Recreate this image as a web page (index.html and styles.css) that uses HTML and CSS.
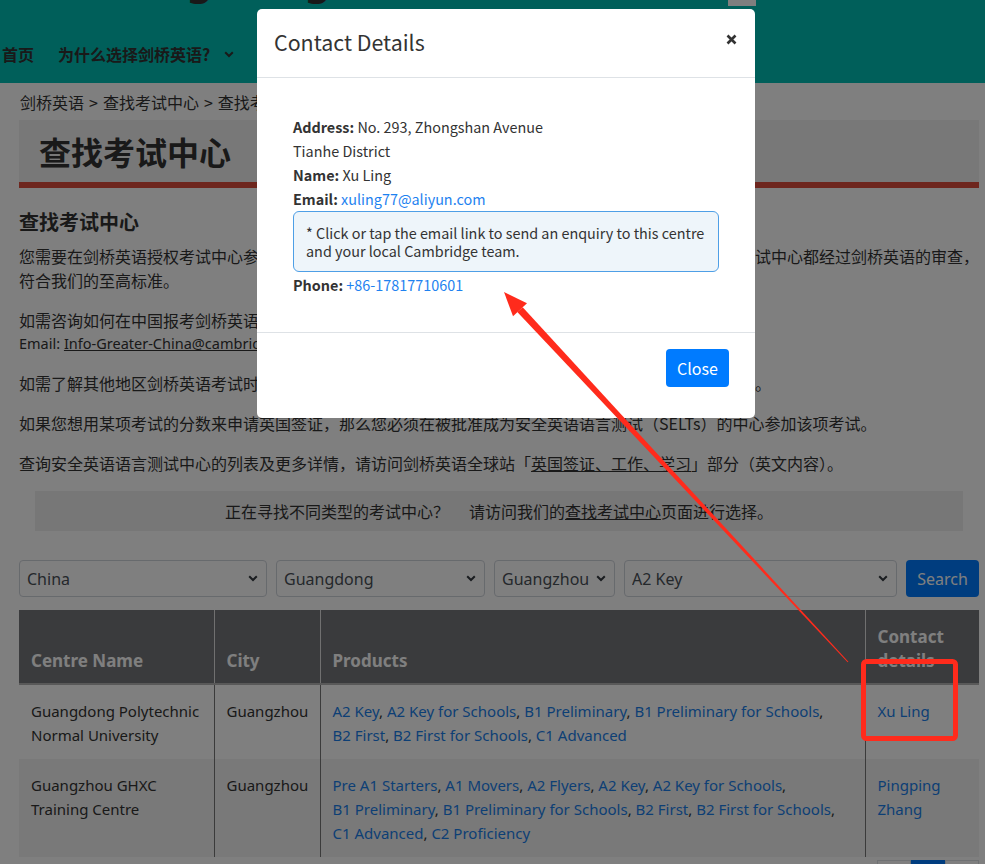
FILE: index.html
```html
<!DOCTYPE html>
<html lang="zh-CN">
<head>
<meta charset="utf-8">
<title>查找考试中心</title>
<link rel="stylesheet" href="styles.css">
</head>
<body>
<header class="site-header">
  <div class="brand-row">
    <span class="brand">Cambridge English</span>
    <span class="lang-box"></span>
  </div>
  <nav class="main-nav">
    <a class="nav-item" href="#">首页</a>
    <a class="nav-item" href="#">为什么选择剑桥英语?
      <svg class="nav-chev" width="10" height="7" viewBox="0 0 10 7"><path d="M1.2 1.2 5 5 8.8 1.2" fill="none" stroke="#333" stroke-width="2"/></svg>
    </a>
    <a class="nav-item" href="#">考试</a>
    <a class="nav-item" href="#">备考</a>
  </nav>
</header>

<main class="page">
  <div class="breadcrumb">
    <a href="#">剑桥英语</a><span class="sep">&gt;</span><a href="#">查找考试中心</a><span class="sep">&gt;</span><span>查找考试中心</span>
  </div>

  <div class="hero"><h1>查找考试中心</h1></div>

  <h2 class="section-title">查找考试中心</h2>
  <p>您需要在剑桥英语授权考试中心参加剑桥英语考试。我们在全球拥有两千八百多家授权考试中心，每个考试中心都经过剑桥英语的审查，符合我们的至高标准。</p>
  <p>如需咨询如何在中国报考剑桥英语考试，请联系剑桥大学英语考评部中国办公室。
    <span class="email-line">Email: <a href="#">Info-Greater-China@cambridgeenglish.org</a></span>
  </p>
  <p>如需了解其他地区剑桥英语考试时间及考试中心信息，请访问剑桥英语全球官方网站的考试中心搜索页面。</p>
  <p>如果您想用某项考试的分数来申请英国签证，那么您必须在被批准成为安全英语语言测试（SELTs）的中心参加该项考试。</p>
  <p>查询安全英语语言测试中心的列表及更多详情，请访问剑桥英语全球站「<a href="#">英国签证、工作、学习</a>」部分（英文内容）。</p>

  <div class="notice">
    <span class="notice-q">正在寻找不同类型的考试中心？</span>请访问我们的<a href="#">查找考试中心</a>页面进行选择。
  </div>

  <form class="filters">
    <div class="select-wrap"><select><option>China</option></select><svg class="chev" width="10" height="7" viewBox="0 0 10 7"><path d="M1.2 1.2 5 5 8.8 1.2" fill="none" stroke="#343a40" stroke-width="2"/></svg></div>
    <div class="select-wrap"><select><option>Guangdong</option></select><svg class="chev" width="10" height="7" viewBox="0 0 10 7"><path d="M1.2 1.2 5 5 8.8 1.2" fill="none" stroke="#343a40" stroke-width="2"/></svg></div>
    <div class="select-wrap"><select><option>Guangzhou</option></select><svg class="chev" width="10" height="7" viewBox="0 0 10 7"><path d="M1.2 1.2 5 5 8.8 1.2" fill="none" stroke="#343a40" stroke-width="2"/></svg></div>
    <div class="select-wrap"><select><option>A2 Key</option></select><svg class="chev" width="10" height="7" viewBox="0 0 10 7"><path d="M1.2 1.2 5 5 8.8 1.2" fill="none" stroke="#343a40" stroke-width="2"/></svg></div>
    <button type="button" class="btn btn-search">Search</button>
  </form>

  <table class="centres">
    <colgroup><col class="c-name"><col class="c-city"><col class="c-prod"><col class="c-contact"></colgroup>
    <thead>
      <tr><th>Centre Name</th><th>City</th><th>Products</th><th>Contact details</th></tr>
    </thead>
    <tbody>
      <tr>
        <td>Guangdong Polytechnic Normal University</td>
        <td>Guangzhou</td>
        <td class="products"><a href="#">A2 Key</a>, <a href="#">A2 Key for Schools</a>, <a href="#">B1 Preliminary</a>, <a href="#">B1 Preliminary for Schools</a>, <a href="#">B2 First</a>, <a href="#">B2 First for Schools</a>, <a href="#">C1 Advanced</a></td>
        <td><a href="#">Xu Ling</a></td>
      </tr>
      <tr>
        <td>Guangzhou GHXC Training Centre</td>
        <td>Guangzhou</td>
        <td class="products"><a href="#">Pre A1 Starters</a>, <a href="#">A1 Movers</a>, <a href="#">A2 Flyers</a>, <a href="#">A2 Key</a>, <a href="#">A2 Key for Schools</a>, <a href="#">B1 Preliminary</a>, <a href="#">B1 Preliminary for Schools</a>, <a href="#">B2 First</a>, <a href="#">B2 First for Schools</a>, <a href="#">C1 Advanced</a>, <a href="#">C2 Proficiency</a></td>
        <td><a href="#">Pingping Zhang</a></td>
      </tr>
    </tbody>
  </table>

  <ul class="pager">
    <li class="pg">‹</li><li class="pg active">1</li><li class="pg">›</li>
  </ul>
</main>

<div class="backdrop"></div>

<div class="modal" role="dialog">
  <div class="modal-header">
    <h3 class="modal-title">Contact Details</h3>
    <svg class="modal-x" width="11" height="11" viewBox="0 0 11 11"><path d="M1.5 1.5 9.5 9.5M9.5 1.5 1.5 9.5" stroke="#333" stroke-width="2.6" stroke-linecap="butt"/></svg>
  </div>
  <div class="modal-body">
    <p><b>Address:</b> No. 293, Zhongshan Avenue</p>
    <p>Tianhe District</p>
    <p><b>Name:</b> Xu Ling</p>
    <p><b>Email:</b> <a href="#">xuling77@aliyun.com</a></p>
    <div class="note">* Click or tap the email link to send an enquiry to this centre and your local Cambridge team.</div>
    <p><b>Phone:</b> <a href="#">+86-17817710601</a></p>
  </div>
  <div class="modal-footer">
    <button type="button" class="btn btn-close">Close</button>
  </div>
</div>

<svg class="annotation" width="985" height="864" viewBox="0 0 985 864">
  <polygon points="848.4,661.7 847.6,662.3 517.3,311.9 522.7,307.3" fill="#ff2b1c"/>
  <polygon points="504,292 527,303.2 513,316.2" fill="#ff2b1c"/>
  <rect x="863.5" y="661.5" width="92" height="77" rx="3" fill="none" stroke="#ff2b1c" stroke-width="5"/>
</svg>
</body>
</html>
```

FILE: styles.css
```css
* { box-sizing: border-box; }
html, body { margin: 0; padding: 0; }
body {
  font-family: "Noto Sans", "Noto Sans CJK SC", sans-serif;
  font-size: 16px;
  line-height: 24px;
  color: #333;
  background: #fff;
  width: 985px;
  height: 864px;
  overflow: hidden;
}
a { color: #1a7fea; text-decoration: none; }

/* header */
.site-header {
  background: #00beb4;
  height: 83px;
  display: flex;
  flex-direction: column;
}
.brand-row {
  height: 28px;
  overflow: hidden;
  display: flex;
  justify-content: space-between;
  align-items: flex-start;
}
.brand {
  font-family: "Noto Sans", sans-serif;
  font-size: 40px;
  line-height: 40px;
  font-weight: 700;
  color: #333;
  margin-top: -40px;
  margin-left: 4px;
  letter-spacing: 2px;
}
.lang-box {
  width: 28px;
  height: 6px;
  background: #fff;
  margin-right: 229px;
}
.main-nav {
  display: flex;
  align-items: center;
  gap: 24px;
  padding-left: 2px;
  height: 52px;
}
.nav-item {
  font-family: "Noto Sans CJK SC", sans-serif;
  font-weight: 700;
  font-size: 16px;
  color: #333;
  display: flex;
  align-items: center;
  gap: 8px;
}
.nav-chev { margin-left: 6px; }

/* page */
.page {
  width: 960px;
  margin-left: 19px;
  font-family: "Noto Sans", "Noto Sans CJK SC", sans-serif;
}
.breadcrumb {
  font-family: "Noto Sans CJK SC", sans-serif;
  margin-top: 7px;
  margin-bottom: 6px;
  padding-left: 1px;
  height: 24px;
}
.breadcrumb a { color: #333; }
.breadcrumb .sep { margin: 0 5px; }
.hero {
  background: #f0f0f0;
  border-bottom: 6px solid #dc4c3c;
  height: 68px;
  padding-left: 20px;
  display: flex;
  align-items: center;
}
.hero h1 {
  margin: 0;
  font-family: "Noto Sans CJK SC", sans-serif;
  font-size: 32px;
  line-height: 40px;
  font-weight: 700;
  color: #333;
}
.section-title {
  font-family: "Noto Sans CJK SC", sans-serif;
  font-size: 20px;
  line-height: 30px;
  font-weight: 700;
  margin: 19px 0 7px;
}
.page p {
  margin: 0 0 16px;
  font-family: "Noto Sans CJK SC", sans-serif;
}
.page p a { color: #333; text-decoration: underline; }
.email-line {
  display: block;
  font-family: "Noto Sans", sans-serif;
  font-size: 14.5px;
  line-height: 23px;
}
.notice {
  background: #eee;
  margin: 0 16px;
  padding: 8px 0;
  text-align: center;
  font-family: "Noto Sans CJK SC", sans-serif;
}
.notice a { color: #333; text-decoration: underline; }
.notice-q { margin-right: 20px; }

/* filters */
.filters {
  display: grid;
  grid-template-columns: 248px 209px 121px 273px 73px;
  gap: 9px;
  margin-top: 29px;
  height: 37px;
}
.select-wrap { position: relative; }
.select-wrap select {
  appearance: none;
  -webkit-appearance: none;
  width: 100%;
  height: 37px;
  border: 1px solid #ced4da;
  border-radius: 4px;
  background: #fff;
  color: #495057;
  font-family: "Noto Sans", sans-serif;
  font-size: 16px;
  padding: 0 24px 0 7px;
}
.chev {
  position: absolute;
  right: 9px;
  top: 15px;
  pointer-events: none;
}
.btn {
  border: 0;
  border-radius: 4px;
  background: #007bff;
  color: #fff;
  font-size: 16px;
  cursor: pointer;
}
.btn-search {
  height: 37px;
  font-family: "Noto Sans", sans-serif;
  padding: 0;
}

/* table */
.centres {
  width: 960px;
  margin-top: 13px;
  border-collapse: collapse;
  table-layout: fixed;
  font-family: "Noto Sans", sans-serif;
  font-size: 15px;
  line-height: 24px;
}
.c-name { width: 195px; }
.c-city { width: 106px; }
.c-prod { width: 545px; }
.c-contact { width: 114px; }
.centres th {
  background: #75777a;
  color: #fff;
  font-size: 17px;
  font-weight: 700;
  text-align: left;
  vertical-align: bottom;
  padding: 15px 12px 10px;
  border-bottom: 2px solid #b2b2b2;
  border-left: 1px solid #e0e0e0;
}
.centres th:first-child { border-left: 0; }
.centres td {
  vertical-align: top;
  padding: 14px 12px 12px;
  border-left: 1px solid #777;
  color: #333;
}
.centres td:first-child { border-left: 0; }
.centres td.products a { white-space: nowrap; }
.centres tbody tr:nth-child(2) td { background: #f2f2f2; }

.pager {
  list-style: none;
  margin: 3px 0 0;
  padding: 0;
  display: flex;
  justify-content: flex-end;
}
.pg {
  width: 34px;
  height: 34px;
  border: 1px solid #dee2e6;
  text-align: center;
  line-height: 32px;
  color: #007bff;
}
.pg.active { background: #007bff; border-color: #007bff; color: #fff; }

/* overlay */
.backdrop {
  position: fixed;
  inset: 0;
  background: rgba(0, 0, 0, 0.5);
  z-index: 5;
}
.modal {
  position: fixed;
  left: 257px;
  top: 9px;
  width: 498px;
  background: #fff;
  border-radius: 5px;
  z-index: 10;
  font-family: "Noto Sans CJK SC", sans-serif;
  color: #333;
}
.modal-header {
  height: 69px;
  padding: 0 18px 2px 17px;
  display: flex;
  justify-content: space-between;
  align-items: center;
  border-bottom: 1px solid #dee2e6;
}
.modal-title {
  margin: 0;
  font-size: 21.4px;
  font-weight: 400;
  line-height: 32px;
}
.modal-x {
  margin-top: -6px;
  margin-right: 0;
}
.modal-body {
  padding: 37px 36px 35px;
  font-size: 14.4px;
  line-height: 24px;
}
.modal-body p { margin: 0; }
.modal-body a { color: #1e82f0; }
.note {
  border: 1px solid #4e9fe6;
  background: #eef5fa;
  border-radius: 6px;
  padding: 12px 12px 11px;
  line-height: 18px;
  margin-bottom: 1px;
}
.modal-footer {
  border-top: 1px solid #dee2e6;
  padding: 16px 26px 31px;
  display: flex;
  justify-content: flex-end;
}
.btn-close {
  height: 38px;
  width: 63px;
  font-family: "Noto Sans CJK SC", sans-serif;
  font-size: 16px;
  padding: 0;
}
.annotation {
  position: fixed;
  left: 0;
  top: 0;
  z-index: 20;
  pointer-events: none;
}
```
